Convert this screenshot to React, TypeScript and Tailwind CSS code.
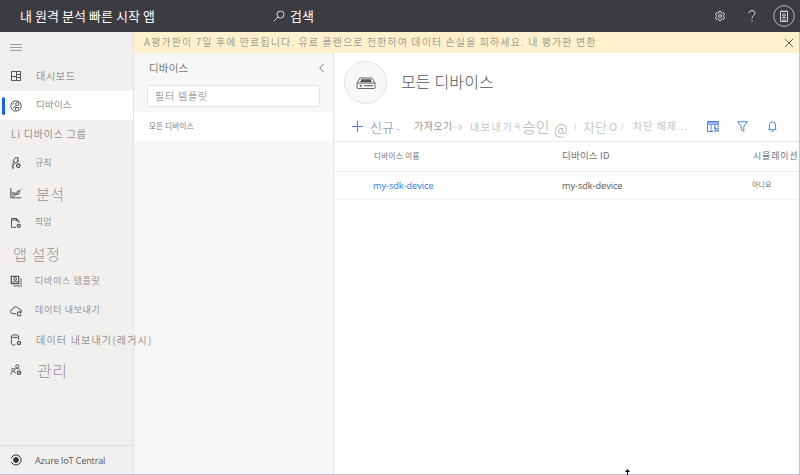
import React from "react";
import { Settings } from "lucide-react";

type IconProps = { children: React.ReactNode; className?: string; box?: string };

function Icon({ children, className = "h-3 w-3", box = "0 0 12 12" }: IconProps) {
  return (
    <svg viewBox={box} className={`shrink-0 ${className}`} fill="none" stroke="currentColor" strokeWidth="1">
      {children}
    </svg>
  );
}

const DashboardIcon = () => (
  <Icon><path d="M1.5 1.5h9v9h-9zM6.5 1.5v9M1.5 6.5h5M6.5 4.5h4M6.5 7.5h4" /></Icon>
);
const DevicesIcon = () => (
  <Icon>
    <circle cx="6" cy="6" r="5.2" />
    <circle cx="7.3" cy="4" r="1.6" />
    <path d="M6.2 5.2 3 8.2M3 4.5l1-1.5M5.5 9.7V7.5h3.3M7.7 8.5l1.6.8" />
  </Icon>
);
const RulesIcon = () => (
  <Icon>
    <path d="M5 .8h3.4L7 4h2L5 6.6M5 .8 3 5h2L3.5 7.5M1.8 6.5 4 8 1.7 9.3 4 11H2" />
    <circle cx="8.3" cy="8.7" r="1.7" strokeWidth="1.3" />
  </Icon>
);
const AnalyticsIcon = () => (
  <Icon><path d="M.8 1v9.8h10.7M1 8.5l3-3 2 2L11 2.5M1 4.5l3.2 3L8 3.7l2 1.5M2 10l3-2 5-1.5" /></Icon>
);
const JobsIcon = () => (
  <Icon>
    <path d="M6 10.3H1.5V1.5h5L9 3.8V6M1.5 3h5M6.5 1.5V4H9" />
    <circle cx="8.8" cy="8.8" r="1.5" strokeWidth="1.3" />
  </Icon>
);
const TemplatesIcon = () => (
  <Icon>
    <path d="M9.8 4.2h1.2v6.8H4.2V9.8" stroke="#aaa" strokeWidth="1.8" />
    <path d="M1.3 1.3h7.4v7.4H1.3z" strokeWidth="1.2" />
    <circle cx="5.2" cy="4" r="1.3" />
    <path d="m2.5 7.8 2-2.4M7.8 7.8 6 5.5M3 6.8h4.5" strokeWidth=".8" />
  </Icon>
);
const CloudIcon = () => (
  <Icon>
    <path d="M6 8.7H3a2.2 2.2 0 0 1-.3-4.4 3.2 3.2 0 0 1 6.1-.4 2.4 2.4 0 0 1 2.5 2.4" />
    <path d="M10.8 7.5a2 2 0 1 0 .3 2M11 6v1.8H9.3" strokeWidth="1.1" />
  </Icon>
);
const DatabaseIcon = () => (
  <Icon>
    <ellipse cx="5" cy="2.2" rx="3.6" ry="1.4" />
    <path d="M1.4 2.2v7.6c0 .7 1.6 1.2 4 1.2M8.6 2.2V6" />
    <circle cx="9" cy="9" r="1.6" strokeWidth="1.4" />
  </Icon>
);
const AdminIcon = () => (
  <Icon>
    <circle cx="7.2" cy="2.4" r="1.6" />
    <circle cx="3.2" cy="5.8" r="1.5" />
    <path d="M.8 10.5c.2-2 1-3 2.4-3s2 .8 2.3 2M5.2 5c1.6-1.1 3.6-.8 4.2 1" />
    <circle cx="9" cy="8.8" r="1.6" strokeWidth="1.4" />
  </Icon>
);

type NavItem = { label: string; icon?: React.ReactNode; row: string; text: string };

const nav: NavItem[] = [
  { label: "대시보드", icon: <DashboardIcon />, row: "h-[30px]", text: "ml-[14px] text-[10px] tracking-[0.7px]" },
  { label: "디바이스", icon: <DevicesIcon />, row: "h-[29px] bg-white", text: "ml-[14px] pb-[2px] text-[9.5px] tracking-[0.2px]" },
  { label: "Li 디바이스 그룹", row: "h-[28px]", text: "ml-px text-[10px] tracking-[0.8px]" },
  { label: "규칙", icon: <RulesIcon />, row: "h-[30px]", text: "ml-[13px] pb-[2px] text-[9px]" },
  { label: "분석", icon: <AnalyticsIcon />, row: "h-[30px]", text: "ml-[14px] text-[15px] font-light tracking-[0.4px]" },
  { label: "작업", icon: <JobsIcon />, row: "h-[29px]", text: "ml-[13px] pb-[2px] text-[9px]" },
  { label: "앱 설정", row: "h-[29px] pt-[3px]", text: "ml-[3px] text-[15px] font-light tracking-[0.7px]" },
  { label: "디바이스 템플릿", icon: <TemplatesIcon />, row: "h-[30px]", text: "ml-[13px] pb-[2px] text-[9px] tracking-[0.7px]" },
  { label: "데이터 내보내기", icon: <CloudIcon />, row: "h-[29px]", text: "ml-[13px] pb-[2px] text-[9px] tracking-[0.7px]" },
  { label: "데이터 내보내기(레거시)", icon: <DatabaseIcon />, row: "h-[30px]", text: "ml-[14px] text-[10px] tracking-[1.2px]" },
  { label: "관리", icon: <AdminIcon />, row: "h-[30px]", text: "ml-[15px] text-[16px] font-light tracking-[0.6px]" },
];

function Header() {
  return (
    <header className="flex h-8 shrink-0 items-center bg-[#3c3b40] text-white">
      <div className="w-[267px] pb-[2px] pl-5 text-[13px] tracking-[0.05px]">내 원격 분석 빠른 시작 앱</div>
      <div className="flex h-[23px] w-[267px] items-center rounded-sm border border-[#38373c] pl-[5px] text-[13px]">
        <Icon className="mr-[5px] h-3 w-3 text-[#ddd]">
          <circle cx="7.5" cy="4.5" r="3.5" />
          <path d="M5 7 .7 11.3" />
        </Icon>
        <span className="pb-px">검색</span>
      </div>
      <Settings className="ml-[180px] h-3 w-3 text-[#ddd]" strokeWidth={2} />
      <Icon className="ml-[22px] h-3 w-2 text-[#ddd]" box="0 0 8 12">
        <path d="M1 3.2C1 1.5 2.2.7 4 .7s3 .9 3 2.4C7 5.4 4 5.4 4 8.4M4 10.2v1.3" />
      </Icon>
      <Icon className="ml-[17px] h-[22px] w-[22px] text-[#d5d5d5]" box="0 0 22 22">
        <circle cx="11" cy="11" r="10.3" strokeWidth=".8" />
        <path d="M7.5 6.5h7v10h-7zM9 6.5V5M13 6.5V5M9 15h4M9 13.5c.2-1.5 3.8-1.5 4 0" />
        <circle cx="11" cy="10" r="1.3" />
      </Icon>
    </header>
  );
}

function Sidebar() {
  return (
    <aside className="relative z-10 flex w-[134px] shrink-0 flex-col border-r border-[#e1e1e1] bg-[#f2f0ef]">
      <div className="flex h-[29px] items-center pl-[10px] text-[#888]">
        <Icon><path d="M0 3.5h12M0 6.5h12M0 9.5h12" strokeWidth=".8" /></Icon>
      </div>
      {nav.map((item) => (
        <div key={item.label} className={`flex shrink-0 items-center ${item.row}`}>
          <div className="flex h-full w-[10px] shrink-0 items-center pl-[2px]">
            {item.label === "디바이스" && <div className="h-[18px] w-[3px] rounded-sm bg-[#0f62fe]" />}
          </div>
          {item.icon && <span className="text-[#555]">{item.icon}</span>}
          <span className={`whitespace-nowrap text-[#929292] ${item.text}`}>{item.label}</span>
        </div>
      ))}
      <div className="mt-auto flex h-[29px] items-center border-t border-[#dedede] pl-[10px] font-['Open_Sans',sans-serif] text-[9.2px] tracking-[-0.2px] text-[#555]">
        <Icon className="mr-[13px] h-3 w-3 text-[#333]">
          <circle cx="6" cy="6" r="2.4" fill="currentColor" />
          <path d="M1 4.5 3 1.8 6 .8l3 1 2 2.7v3L9 10l-3 1.2L3 10 1 8" />
        </Icon>
        <span className="pt-[2px]">Azure IoT Central</span>
      </div>
    </aside>
  );
}

function Banner() {
  return (
    <div className="flex h-[21px] shrink-0 items-center justify-between bg-[#fff1cc] pl-[10px] pr-[6px]">
      <span className="whitespace-nowrap pb-[2px] text-[10px] tracking-[1.09px] text-[#a39e90]">
        A평가판이 7일 후에 만료됩니다. 유료 플랜으로 전환하여 데이터 손실을 피하세요. 내 평가판 변환
      </span>
      <Icon className="h-2 w-2 text-[#666]" box="0 0 8 8"><path d="m0 0 8 8M8 0 0 8" /></Icon>
    </div>
  );
}

function TemplatePanel() {
  return (
    <section className="flex w-[200px] shrink-0 flex-col border-r border-[#e4e4e4] bg-[#f7f7f7]">
      <div className="flex h-8 items-center justify-between pb-[2px] pl-[15px] pr-[9px] text-[#777]">
        <span className="text-[10.5px] tracking-[0.2px]">디바이스</span>
        <Icon className="h-2 w-[5px]" box="0 0 5 8"><path d="M4.5 0 .7 4l3.8 4" /></Icon>
      </div>
      <div className="ml-[13px] flex h-[22px] w-[173px] shrink-0 items-center rounded-xs border border-[#e4e4e4] bg-white pl-[7px] text-[10px] tracking-[0.8px] text-[#a3a3a3]">
        <span className="pb-px">필터 템플릿</span>
      </div>
      <div className="mt-[5px] flex h-[29px] items-center bg-white pb-[2px] pl-[15px] text-[7.5px] tracking-[0.25px] text-[#777]">
        모든 디바이스
      </div>
    </section>
  );
}

function Toolbar() {
  return (
    <div className="flex h-[30px] shrink-0 items-center whitespace-nowrap border-b border-[#e9e9e9] pl-[18px] text-[#c4c4c4]">
      <Icon className="h-[11px] w-[11px] text-[#4a80ee]" box="0 0 11 11"><path d="M5.5 0v11M0 5.5h11" /></Icon>
      <span className="ml-[7px] w-[44px] text-[13px] font-light text-[#7d8498]">신규<span className="ml-[2px] text-[10px]">-</span></span>
      <span className="w-[38px] pb-[2px] text-[10px] tracking-[0.5px] text-[#959595]">가져오기</span>
      <Icon className="h-2 w-[11px] text-[#aaa]" box="0 0 11 8"><path d="M0 4h5" stroke="#ddd" /><path d="m7 1.5 2.5 2.5L7 6.5" /></Icon>
      <span className="ml-[7px] w-[44px] text-[10px] tracking-[1.6px]">내보내기</span>
      <span className="w-[8px] text-[7px]">꼭</span>
      <span className="w-[32px] text-[15px] font-light text-[#b0b0b0]">승인</span>
      <span className="w-[20px] pt-[3px] text-[15px] font-light text-[#b0b0b0]">@</span>
      <span className="w-[9px] text-[7px]">)</span>
      <span className="w-[26px] text-[13px] font-light text-[#b0b0b0]">차단</span>
      <span className="w-[12px] text-[11px]">O</span>
      <span className="w-[12px] text-[7px]">)</span>
      <span className="w-[74px] pb-[2px] text-[10px] tracking-[1px]">차단 해제...</span>
      <span className="flex items-center gap-[18px] text-[#4a80ee]">
        <Icon className="h-[11px] w-[12px]" box="0 0 12 11">
          <path d="M6 10.5H.5V.5h10.7V6M.5 3.3h10.7M4 3.3v7.2M7.7 3.3v4M.5 1.8h10.7" />
          <path d="M7 7.7h5M7 9.8h5M8.5 6.2v5M10.7 6.2v5" strokeWidth=".8" />
        </Icon>
        <Icon className="h-[11px] w-[11px]" box="0 0 11 11"><path d="M.6.7h9.8L6.8 5.3v4.9L4.3 8.8V5.3z" /></Icon>
        <Icon className="ml-[2px] h-[11px] w-[9px]" box="0 0 9 11">
          <path d="M.5 8.7h8M1.4 8.5V4a3.1 3.1 0 0 1 6.2 0v4.5M3.3 10.2h2.4" />
        </Icon>
      </span>
    </div>
  );
}

function DeviceTable() {
  return (
    <div className="whitespace-nowrap text-[#707070]">
      <div className="flex h-[30px] items-center overflow-hidden border-b border-[#ededed] pb-[2px] pl-[40px]">
        <span className="w-[188px] shrink-0 text-[7.5px] tracking-[0.4px]">디바이스 이름</span>
        <span className="w-[191px] shrink-0 text-[9.5px] tracking-[0.2px]">디바이스 ID</span>
        <span className="shrink-0 text-[9px] tracking-[0.8px]">시뮬레이션됨</span>
      </div>
      <div className="flex h-[28px] items-center border-b border-[#f4f4f4] pl-[39px] font-['Open_Sans','Noto_Sans_CJK_KR',sans-serif]">
        <span className="w-[189px] shrink-0 text-[9.2px] tracking-[-0.05px] text-[#2879f0]">my-sdk-device</span>
        <span className="w-[190px] shrink-0 text-[9.2px] tracking-[-0.05px] text-[#555]">my-sdk-device</span>
        <span className="shrink-0 pb-[2px] text-[7px]">아니요</span>
      </div>
    </div>
  );
}

export default function App() {
  return (
    <div className="relative flex h-[475px] w-[800px] flex-col overflow-hidden bg-white font-['Noto_Sans_CJK_KR',sans-serif] font-normal leading-none">
      <Header />
      <div className="flex min-h-0 flex-1 border-b border-r border-[#bfc4cf]">
        <Sidebar />
        <div className="flex min-w-0 flex-1 flex-col">
          <Banner />
          <div className="flex min-h-0 flex-1">
            <TemplatePanel />
            <main className="flex min-w-0 flex-1 flex-col overflow-hidden">
              <div className="flex h-[59px] shrink-0 items-center pl-[10px] text-[#555]">
                <div className="flex h-[43px] w-[43px] items-center justify-center rounded-full border border-[#e3e3e3] bg-[#f7f7f7]">
                  <Icon className="h-3 w-5" box="0 0 20 12">
                    <path d="M1 6 4 1h12l3 5v4.5a1 1 0 0 1-1 1H2a1 1 0 0 1-1-1zM1 6h18" strokeWidth=".9" />
                    <path d="M5 3h10M4.5 4.5h11" strokeWidth="1.3" />
                    <path d="M8 8.7h9" />
                    <circle cx="4.8" cy="8.7" r=".8" />
                  </Icon>
                </div>
                <span className="ml-[14px] pb-[3px] text-[16px] font-light tracking-[0.15px]">모든 디바이스</span>
              </div>
              <Toolbar />
              <DeviceTable />
            </main>
          </div>
        </div>
      </div>
      <svg className="absolute bottom-0 left-[625px] h-[6px] w-[5px]" viewBox="0 0 5 6">
        <path d="M2.5 0 5 3H3v3H2V3H0z" fill="#000" />
      </svg>
    </div>
  );
}
